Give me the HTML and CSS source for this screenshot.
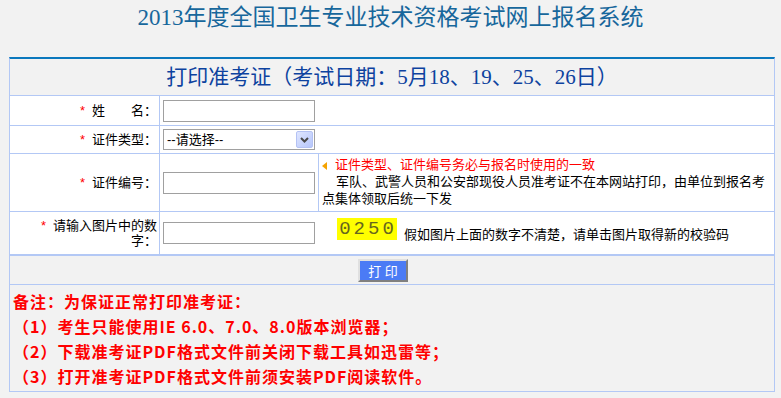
FILE: index.html
```html
<!DOCTYPE html>
<html lang="zh-CN">

<head>
  <meta charset="UTF-8">
  <title>2013年度全国卫生专业技术资格考试网上报名系统</title>
  <link rel="stylesheet" href="styles.css">
</head>

<body>
  <h1 class="title">2013年度全国卫生专业技术资格考试网上报名系统</h1>

  <div class="box">
    <div class="box-head">打印准考证（考试日期：5月18、19、25、26日）</div>

    <form class="form" onsubmit="return false">
      <div class="row row-name">
        <label class="label"><span class="req">*</span>姓　　名：</label>
        <div class="field"><input class="text" type="text"></div>
      </div>

      <div class="row row-type">
        <label class="label"><span class="req">*</span>证件类型：</label>
        <div class="field">
          <span class="select-wrap">
            <select class="select">
              <option>--请选择--</option>
              <option>身份证</option>
              <option>军官证</option>
            </select>
            <span class="select-btn">
              <svg width="9" height="6" viewBox="0 0 9 6"><path d="M1 1l3.5 3.5L8 1" fill="none" stroke="#4a4a4a" stroke-width="2"/></svg>
            </span>
          </span>
        </div>
      </div>

      <div class="row row-id">
        <label class="label"><span class="req">*</span>证件编号：</label>
        <div class="field field-narrow"><input class="text" type="text"></div>
        <div class="tips">
          <p class="tip-warn"><span class="tri"></span>证件类型、证件编号务必与报名时使用的一致</p>
          <p class="tip-text">军队、武警人员和公安部现役人员准考证不在本网站打印，由单位到报名考点集体领取后统一下发</p>
        </div>
      </div>

      <div class="row row-code">
        <label class="label"><span class="req">*</span>请输入图片中的数字：</label>
        <div class="field">
          <input class="text" type="text">
          <span class="captcha" title="看不清？换一张">0250</span>
          <span class="hint">假如图片上面的数字不清楚，请单击图片取得新的校验码</span>
        </div>
      </div>

      <div class="actions">
        <button class="btn-print" type="submit">打 印</button>
      </div>
    </form>

    <div class="notes">
      <p>备注：为保证正常打印准考证：</p>
      <p>（1）考生只能使用IE 6.0、7.0、8.0版本浏览器；</p>
      <p>（2）下载准考证PDF格式文件前关闭下载工具如迅雷等；</p>
      <p>（3）打开准考证PDF格式文件前须安装PDF阅读软件。</p>
    </div>
  </div>
</body>

</html>
```

FILE: styles.css
```css
* {
  box-sizing: border-box;
}

body {
  margin: 0;
  background: #f2f2f2;
  font-family: "Liberation Sans", "Noto Sans CJK SC", sans-serif;
  font-size: 13px;
  color: #000;
}

p {
  margin: 0;
}

.title {
  height: 57px;
  margin: 0;
  padding-top: 5px;
  text-align: center;
  font-family: "Liberation Serif", "Noto Sans CJK SC", serif;
  font-size: 23px;
  font-weight: normal;
  line-height: 26px;
  color: #17679c;
}

.box {
  width: 766px;
  margin-left: 9px;
  border: 1px solid #b3c8f5;
  border-top: 2px solid #0b78bd;
}

.box-head {
  height: 37px;
  border-bottom: 1px solid #b3c8f5;
  text-align: center;
  font-family: "Liberation Serif", "Noto Sans CJK SC", serif;
  font-size: 21px;
  line-height: 36px;
  color: #0d429f;
}

.row {
  display: flex;
  background: #fff;
  border-bottom: 1px solid #b3c8f5;
}

.row-name {
  height: 30px;
}

.row-type {
  height: 28px;
}

.row-id {
  height: 58px;
}

.row-code {
  height: 44px;
  border-bottom-width: 2px;
}

.label {
  display: flex;
  align-items: center;
  justify-content: flex-end;
  flex-shrink: 0;
  width: 150px;
  padding: 0 2px 0 20px;
  border-right: 1px solid #b3c8f5;
  text-align: right;
  line-height: 15px;
}

.row-code .label {
  display: block;
  padding-top: 6px;
}

.req {
  margin-right: 7px;
  color: #f00;
}

.field {
  display: flex;
  align-items: center;
  flex: 1;
  padding-left: 3px;
}

.field-narrow {
  flex: none;
  width: 159px;
  border-right: 1px solid #b3c8f5;
}

.text {
  width: 152px;
  height: 22px;
  margin: 0;
  border: 1px solid #a0a0a0;
  font: inherit;
}

.select-wrap {
  position: relative;
  display: inline-block;
}

.select {
  display: block;
  width: 152px;
  height: 21px;
  margin: 0;
  padding: 0 0 0 3px;
  border: 1px solid #a0a0a0;
  background: #fff;
  font: inherit;
  -webkit-appearance: none;
  appearance: none;
}

.select-btn {
  position: absolute;
  top: 2px;
  right: 2px;
  display: flex;
  align-items: center;
  justify-content: center;
  width: 17px;
  height: 17px;
  border: 1px solid #b4c2f4;
  border-radius: 2px;
  background: linear-gradient(135deg, #dfe6ff, #b6c6fb);
  pointer-events: none;
}

.tips {
  flex: 1;
  padding: 2px 4px 0 3px;
  line-height: 17px;
}

.tip-warn {
  color: #f00;
}

.tri {
  display: inline-block;
  margin-right: 8px;
  border-top: 4px solid transparent;
  border-bottom: 4px solid transparent;
  border-right: 5px solid #f5a300;
  vertical-align: -1px;
}

.tip-text {
  text-indent: 14px;
}

.captcha {
  width: 60px;
  height: 22px;
  margin: -8px 0 0 22px;
  padding-left: 2px;
  background: #ff0;
  text-align: center;
  font-family: "Liberation Mono", monospace;
  font-size: 19px;
  line-height: 22px;
  letter-spacing: 3px;
  color: #66661e;
  cursor: pointer;
}

.hint {
  margin-left: 7px;
}

.actions {
  height: 29px;
  padding: 3px 0 0 348px;
  border-bottom: 1px solid #b3c8f5;
}

.btn-print {
  display: block;
  width: 50px;
  height: 23px;
  padding: 0;
  border: 2px solid;
  border-color: #e0e0e0 #808080 #808080 #e0e0e0;
  background: #4b7bf5;
  color: #fff;
  font: inherit;
  cursor: pointer;
}

.notes {
  height: 106px;
  padding: 4px 3px 0;
  color: #f00;
  font-family: "Noto Sans CJK SC", sans-serif;
  font-size: 16px;
  font-weight: bold;
  line-height: 25px;
  letter-spacing: 1px;
}
```
